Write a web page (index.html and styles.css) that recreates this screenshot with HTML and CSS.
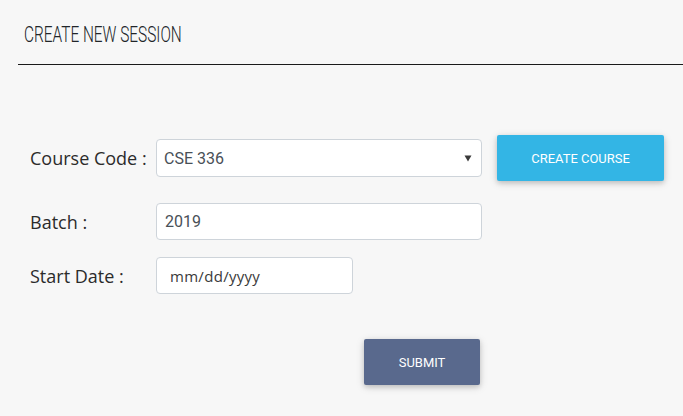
FILE: index.html
```html
<!DOCTYPE html>
<html>
<head>
<meta charset="utf-8">
<link rel="stylesheet" href="styles.css">
</head>
<body>
<div class="page">
  <header class="header">
    <h1 class="title"><span class="title-text">CREATE NEW SESSION</span></h1>
  </header>
  <form class="form">
    <div class="row row-course">
      <label class="label">Course Code :</label>
      <div class="select">
        <span class="select-value">CSE 336</span>
        <svg class="caret" width="8" height="7" viewBox="0 0 8 7"><path d="M0.5 0.5 L7.5 0.5 L4 6.5 Z" fill="#3a3a3a"/></svg>
      </div>
      <button type="button" class="btn btn-info">CREATE COURSE</button>
    </div>
    <div class="row row-batch">
      <label class="label">Batch :</label>
      <input class="input input-wide" type="text" value="2019">
    </div>
    <div class="row row-date">
      <label class="label">Start Date :</label>
      <div class="input input-date">mm/dd/yyyy</div>
    </div>
    <div class="row row-submit">
      <button type="button" class="btn btn-mdb">SUBMIT</button>
    </div>
  </form>
</div>
</body>
</html>
```

FILE: styles.css
```css
* { box-sizing: border-box; }
html, body { margin: 0; padding: 0; }
body {
  background: #f7f7f7;
  width: 683px;
  height: 416px;
  overflow: hidden;
  font-family: "Open Sans", "Liberation Sans", sans-serif;
}
.header {
  margin-left: 18px;
  border-bottom: 1px solid #1a1a1a;
  padding: 22px 0 16px 6px;
}
.title {
  margin: 0;
  font-family: Roboto, "Liberation Sans", sans-serif;
  font-weight: 300;
  font-size: 22px;
  line-height: 26px;
  color: #212529;
  white-space: nowrap;
}
.title-text {
  display: inline-block;
  transform: scaleX(0.7);
  transform-origin: left center;
}
.form {
  margin: 70px 0 0 30px;
  display: flex;
  flex-direction: column;
}
.row {
  display: flex;
  align-items: center;
}
.row-batch { margin-top: 22px; }
.row-date { margin-top: 17px; }
.row-submit { margin-top: 45px; padding-left: 334px; }
.label {
  width: 126px;
  font-size: 18px;
  color: #2b2b2b;
  white-space: nowrap;
}
.select {
  width: 326px;
  height: 38px;
  background: #fff;
  border: 1px solid #ced4da;
  border-radius: 4px;
  display: flex;
  align-items: center;
  padding: 0 9px 0 7px;
  font-family: Roboto, "Liberation Sans", sans-serif;
  font-size: 16px;
  color: #495057;
}
.select-value { flex: 1; }
.caret { display: block; }
.input {
  height: 37px;
  background: #fff;
  border: 1px solid #ced4da;
  border-radius: 4px;
  padding: 0 8px;
  font-family: Roboto, "Liberation Sans", sans-serif;
  font-size: 16px;
  color: #495057;
  outline: none;
}
.input-wide { width: 326px; }
.input-date {
  width: 197px;
  display: flex;
  align-items: center;
  padding-left: 13px;
  font-family: "Open Sans", "Liberation Sans", sans-serif;
  font-size: 15px;
  letter-spacing: 0.3px;
  color: #3a3a3a;
}
.btn {
  height: 46px;
  border: 0;
  border-radius: 2px;
  color: #fff;
  font-family: Roboto, "Liberation Sans", sans-serif;
  font-size: 12.96px;
  font-weight: 400;
  box-shadow: 0 2px 5px 0 rgba(0,0,0,.16), 0 2px 10px 0 rgba(0,0,0,.12);
  padding: 0;
  cursor: pointer;
}
.btn-info {
  width: 167px;
  margin-left: 15px;
  background: #33b5e5;
}
.btn-mdb {
  width: 116px;
  background: #59698d;
}
```
